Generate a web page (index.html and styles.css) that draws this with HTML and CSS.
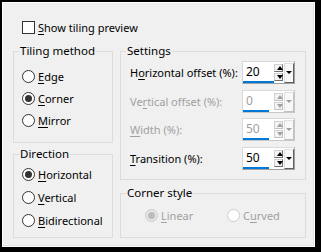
FILE: index.html
```html
<!DOCTYPE html>
<html lang="en">
<head>
  <meta charset="UTF-8" />
  <title>Tiling</title>
  <link rel="stylesheet" href="styles.css">
</head>
<body>

<div class="dialog">
  <div class="panel">
    <label class="check"><span class="box"></span><span><u>S</u>how tiling preview</span></label>

    <div class="columns">
      <div class="col">
        <fieldset class="group tiling">
          <legend>Tiling method</legend>
          <label class="radio"><span class="dot"></span><span><u>E</u>dge</span></label>
          <label class="radio on"><span class="dot"></span><span><u>C</u>orner</span></label>
          <label class="radio"><span class="dot"></span><span><u>M</u>irror</span></label>
        </fieldset>

        <fieldset class="group direction">
          <legend>Direction</legend>
          <label class="radio on"><span class="dot"></span><span><u>H</u>orizontal</span></label>
          <label class="radio"><span class="dot"></span><span><u>V</u>ertical</span></label>
          <label class="radio"><span class="dot"></span><span><u>B</u>idirectional</span></label>
        </fieldset>
      </div>

      <div class="col">
        <fieldset class="group settings">
          <legend>Settings</legend>
          <div class="row">
            <span class="label">H<u>o</u>rizontal offset (%):</span>
            <div class="spin">
              <div class="field">20<i class="bar wide"></i></div>
              <div class="arrows"><b class="up"></b><b class="down"></b></div>
              <div class="drop"></div>
            </div>
          </div>
          <div class="row off">
            <span class="label">Ve<u>r</u>tical offset (%):</span>
            <div class="spin">
              <div class="field">0<i class="bar"></i></div>
              <div class="arrows"><b class="up"></b><b class="down"></b></div>
              <div class="drop"></div>
            </div>
          </div>
          <div class="row off">
            <span class="label"><u>W</u>idth (%):</span>
            <div class="spin">
              <div class="field">50<i class="bar"></i></div>
              <div class="arrows"><b class="up"></b><b class="down"></b></div>
              <div class="drop"></div>
            </div>
          </div>
          <div class="row">
            <span class="label"><u>T</u>ransition (%):</span>
            <div class="spin">
              <div class="field">50<i class="bar"></i></div>
              <div class="arrows"><b class="up"></b><b class="down"></b></div>
              <div class="drop"></div>
            </div>
          </div>
        </fieldset>

        <fieldset class="group corner">
          <legend>Corner style</legend>
          <div class="inline">
            <label class="radio off on"><span class="dot"></span><span><u>L</u>inear</span></label>
            <label class="radio off"><span class="dot"></span><span>C<u>u</u>rved</span></label>
          </div>
        </fieldset>
      </div>
    </div>
  </div>
</div>

</body>
</html>
```

FILE: styles.css
```css
body {
  margin: 0;
  background: #000;
  font-family: 'Noto Sans', 'Open Sans', sans-serif;
  font-size: 11px;
  color: #000;
}

.dialog {
  width: 321px;
  height: 252px;
  box-sizing: border-box;
  padding: 2px 6px 5px 2px;
}

.panel {
  height: 100%;
  box-sizing: border-box;
  background: #f0f0f0;
  border: 1px solid #fff;
  box-shadow: inset -1px -1px 0 #e3e3e3;
}

u {
  text-decoration-thickness: 1px;
  text-underline-offset: 2px;
}

/* checkbox */
.check {
  display: flex;
  align-items: center;
  height: 15px;
  margin: 17px 0 0 19px;
  line-height: 15px;
  white-space: nowrap;
}

.box {
  width: 11px;
  height: 11px;
  margin-right: 3px;
  border: 1px solid #333;
  background: #fff;
}

/* columns */
.columns {
  display: flex;
  gap: 7px;
  margin: 8px 0 0 10px;
}

.col {
  display: flex;
  flex-direction: column;
}

.col:first-child {
  width: 100px;
  gap: 3px;
}

.col:last-child {
  width: 186px;
  gap: 5px;
}

.group {
  margin: 0;
  padding: 0;
  min-width: 0;
  border: 1px solid #dcdcdc;
  box-sizing: border-box;
}

.group legend {
  margin-left: 5px;
  padding: 0 1px;
  height: 16px;
  line-height: 16px;
  font-size: 11.5px;
}

.tiling { height: 100px; padding-top: 6px; }
.direction { height: 92px; padding-top: 1px; }
.settings { height: 137px; padding-top: 2px; }
.corner { height: 53px; padding-top: 6px; }

/* radios */
.radio {
  display: flex;
  align-items: center;
  height: 22px;
  padding-left: 8px;
  white-space: nowrap;
}

.direction .radio {
  height: 23px;
}

.dot {
  position: relative;
  width: 11px;
  height: 11px;
  margin-right: 3px;
  border: 1px solid #333;
  border-radius: 50%;
  background: #fff;
}

.radio.on .dot::after {
  content: '';
  position: absolute;
  left: 2px;
  top: 2px;
  width: 7px;
  height: 7px;
  border-radius: 50%;
  background: #333;
}

.radio.off {
  color: #a0a0a0;
}

.radio.off .dot {
  border-color: #cccccc;
}

.radio.off.on .dot {
  background: #e6e6e6;
}

.radio.off.on .dot::after {
  background: #bcbcbc;
}

.inline {
  display: flex;
  padding-left: 16px;
}

.inline .radio {
  height: 16px;
}

.inline .radio:first-child {
  width: 74px;
}

/* settings rows */
.row {
  display: flex;
  align-items: center;
  justify-content: space-between;
  height: 28.5px;
  padding: 0 10px 0 9px;
  white-space: nowrap;
}

.row .label {
  margin-top: -5px;
}

.row.off {
  color: #a0a0a0;
}

.spin {
  display: flex;
  width: 53px;
  height: 23px;
  box-sizing: border-box;
  background: #fff;
  border: 1px solid #d9d9d9;
  border-right-color: #a0a0a0;
  border-bottom-color: #a0a0a0;
  margin-top: -5px;
}

.field {
  position: relative;
  width: 31px;
  padding: 3px 0 0 3px;
  line-height: 14px;
  font-size: 12px;
}

.bar {
  position: absolute;
  left: 0;
  bottom: 0;
  width: 26px;
  height: 2px;
  background: #0078d7;
}

.bar.wide {
  width: 31px;
}

.arrows {
  display: flex;
  flex-direction: column;
  gap: 1px;
  padding-top: 2px;
  width: 10px;
}

.arrows b {
  position: relative;
  height: 6px;
  border: 1px solid #d0d0d0;
  border-right-color: #707070;
  border-bottom-color: #707070;
  background: #f4f4f4;
}

.arrows b::after {
  content: '';
  position: absolute;
  left: 2px;
  border-left: 3px solid transparent;
  border-right: 3px solid transparent;
}

.arrows .up::after {
  top: 1px;
  border-bottom: 4px solid #000;
}

.arrows .down::after {
  top: 1px;
  border-top: 4px solid #000;
}

.drop {
  position: relative;
  width: 9px;
  height: 18px;
  margin: 1px 0 0 1px;
  border: 1px solid #e0e0e0;
  border-right-color: #606060;
  border-bottom-color: #606060;
  background: #f8f8f8;
}

.drop::after {
  content: '';
  position: absolute;
  left: 1px;
  top: 7px;
  border-left: 3px solid transparent;
  border-right: 3px solid transparent;
  border-top: 3px solid #000;
}

.row.off .arrows b::after,
.row.off .drop::after {
  border-top-color: #a0a0a0;
  border-bottom-color: #a0a0a0;
}

.row.off .arrows b,
.row.off .drop {
  border-right-color: #c0c0c0;
  border-bottom-color: #c0c0c0;
}

.row.off .spin {
  border-right-color: #c8c8c8;
  border-bottom-color: #c8c8c8;
}
```
